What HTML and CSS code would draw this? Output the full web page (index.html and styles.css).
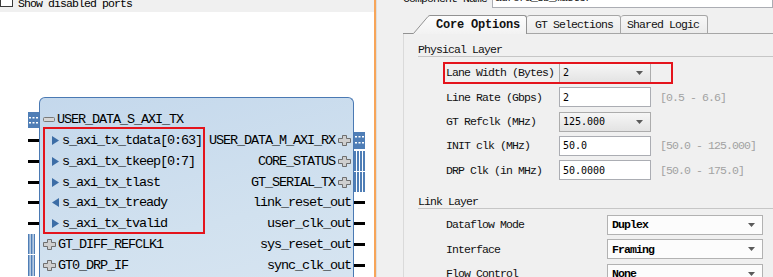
FILE: index.html
```html
<!DOCTYPE html>
<html>
<head>
<meta charset="utf-8">
<title>Aurora IP</title>
<link rel="stylesheet" href="styles.css">
</head>
<body>
<div class="app">
  <div class="left">
    <div class="toolbar">
      <span class="chk"></span><span class="chk-label">Show disabled ports</span>
    </div>
    <div class="canvas">
      <div class="block">
        <div class="col-l">
          <div class="lrow">
            <span class="stub"><svg width="11" height="16" viewBox="0 0 11 16"><rect width="11" height="16" fill="#4f7eb6"/><g fill="#fff"><rect x="1" y="5" width="2" height="1.5"/><rect x="4.5" y="5" width="2" height="1.5"/><rect x="8" y="5" width="2" height="1.5"/><rect x="1" y="10" width="2" height="1.5"/><rect x="4.5" y="10" width="2" height="1.5"/><rect x="8" y="10" width="2" height="1.5"/></g></svg></span>
            <span class="minus"><svg width="12" height="5" viewBox="0 0 12 5"><rect x="0.5" y="0.5" width="11" height="4" rx="1" fill="#d6d6d6" stroke="#7a7a7a"/></svg></span>
            <span class="bus-name">USER_DATA_S_AXI_TX</span>
          </div>
          <div class="hl-group">
            <div class="lrow in-group"><span class="stub"><span class="wire"></span></span><span class="arr"><svg width="7" height="9" viewBox="0 0 7 9"><path d="M0 0L7 4.5L0 9Z" fill="#3c6da6"/></svg></span><span class="pin-name">s_axi_tx_tdata[0:63]</span></div>
            <div class="lrow in-group"><span class="stub"><span class="wire"></span></span><span class="arr"><svg width="7" height="9" viewBox="0 0 7 9"><path d="M0 0L7 4.5L0 9Z" fill="#3c6da6"/></svg></span><span class="pin-name">s_axi_tx_tkeep[0:7]</span></div>
            <div class="lrow in-group"><span class="stub"><span class="wire"></span></span><span class="arr"><svg width="7" height="9" viewBox="0 0 7 9"><path d="M0 0L7 4.5L0 9Z" fill="#3c6da6"/></svg></span><span class="pin-name">s_axi_tx_tlast</span></div>
            <div class="lrow in-group"><span class="stub"><span class="wire"></span></span><span class="arr"><svg width="7" height="9" viewBox="0 0 7 9"><path d="M7 0L0 4.5L7 9Z" fill="#3c6da6"/></svg></span><span class="pin-name">s_axi_tx_tready</span></div>
            <div class="lrow in-group"><span class="stub"><span class="wire"></span></span><span class="arr"><svg width="7" height="9" viewBox="0 0 7 9"><path d="M0 0L7 4.5L0 9Z" fill="#3c6da6"/></svg></span><span class="pin-name">s_axi_tx_tvalid</span></div>
          </div>
          <div class="lrow">
            <span class="stub"><svg width="11" height="21" viewBox="0 0 11 21"><g fill="#4f7eb6"><rect x="0" y="0" width="1.6" height="20"/><rect x="2.6" y="0" width="2" height="20"/><rect x="5.6" y="0" width="1.4" height="20"/></g></svg></span>
            <span class="plus"><svg width="13" height="11" viewBox="0 0 13 11"><path d="M4.5 0.5h4v3h4v4h-4v3h-4v-3h-4v-4h4z" fill="#cfcfcf" stroke="#6f6f6f"/></svg></span>
            <span class="bus-name">GT_DIFF_REFCLK1</span>
          </div>
          <div class="lrow">
            <span class="stub"><svg width="11" height="21" viewBox="0 0 11 21"><g fill="#4f7eb6"><rect x="0" y="0" width="1.6" height="21"/><rect x="2.6" y="0" width="2" height="21"/><rect x="5.6" y="0" width="1.4" height="21"/></g></svg></span>
            <span class="plus"><svg width="13" height="11" viewBox="0 0 13 11"><path d="M4.5 0.5h4v3h4v4h-4v3h-4v-3h-4v-4h4z" fill="#cfcfcf" stroke="#6f6f6f"/></svg></span>
            <span class="bus-name">GT0_DRP_IF</span>
          </div>
        </div>
        <div class="col-r">
          <div class="rrow">
            <span class="bus-name r">USER_DATA_M_AXI_RX</span>
            <span class="plus r"><svg width="13" height="11" viewBox="0 0 13 11"><path d="M4.5 0.5h4v3h4v4h-4v3h-4v-3h-4v-4h4z" fill="#cfcfcf" stroke="#6f6f6f"/></svg></span>
            <span class="stub"><svg width="11" height="17" viewBox="0 0 11 17"><rect width="11" height="17" fill="#4f7eb6"/><g fill="#fff"><rect x="1" y="4" width="2" height="1.5"/><rect x="4.5" y="4" width="2" height="1.5"/><rect x="8" y="4" width="2" height="1.5"/><rect x="1" y="10" width="2" height="1.5"/><rect x="4.5" y="10" width="2" height="1.5"/><rect x="8" y="10" width="2" height="1.5"/></g></svg></span>
          </div>
          <div class="rrow">
            <span class="bus-name r">CORE_STATUS</span>
            <span class="plus r"><svg width="13" height="11" viewBox="0 0 13 11"><path d="M4.5 0.5h4v3h4v4h-4v3h-4v-3h-4v-4h4z" fill="#cfcfcf" stroke="#6f6f6f"/></svg></span>
            <span class="stub"><svg width="11" height="21" viewBox="0 0 11 21"><g fill="#4f7eb6"><rect x="0" y="0" width="2" height="20"/><rect x="3" y="0" width="2" height="20"/><rect x="6" y="0" width="2" height="20"/><rect x="9" y="0" width="2" height="20"/></g></svg></span>
          </div>
          <div class="rrow">
            <span class="bus-name r">GT_SERIAL_TX</span>
            <span class="plus r"><svg width="13" height="11" viewBox="0 0 13 11"><path d="M4.5 0.5h4v3h4v4h-4v3h-4v-3h-4v-4h4z" fill="#cfcfcf" stroke="#6f6f6f"/></svg></span>
            <span class="stub"><svg width="11" height="21" viewBox="0 0 11 21"><g fill="#4f7eb6"><rect x="0" y="0" width="2" height="20"/><rect x="3" y="0" width="2" height="20"/><rect x="6" y="0" width="2" height="20"/><rect x="9" y="0" width="2" height="20"/></g></svg></span>
          </div>
          <div class="rrow"><span class="pin-name r">link_reset_out</span><span class="stub"><span class="wire"></span></span></div>
          <div class="rrow"><span class="pin-name r">user_clk_out</span><span class="stub"><span class="wire"></span></span></div>
          <div class="rrow"><span class="pin-name r">sys_reset_out</span><span class="stub"><span class="wire"></span></span></div>
          <div class="rrow"><span class="pin-name r">sync_clk_out</span><span class="stub"><span class="wire"></span></span></div>
        </div>
      </div>
    </div>
  </div>
  <div class="divider"></div>
  <div class="right">
    <div class="comp">
      <span class="comp-label">Component Name</span>
      <span class="comp-field">aurora_8b_master</span>
    </div>
    <div class="tabs">
      <svg class="slant" width="27" height="19" viewBox="0 0 27 19">
        <defs><linearGradient id="tg" x1="0" y1="0" x2="0" y2="1"><stop offset="0" stop-color="#fdfdfd"/><stop offset="1" stop-color="#f2f2f2"/></linearGradient></defs>
        <path d="M10 19L25 1.5Q26 0.5 27 0.5V19Z" fill="url(#tg)"/>
        <path d="M0 18.5H10.5L25 1.5Q26 0.5 27 0.5" fill="none" stroke="#929292"/>
      </svg>
      <div class="tab sel">Core Options</div>
      <div class="tab gt">GT Selections</div>
      <div class="tab sh">Shared Logic</div>
      <div class="tab-fill"></div>
    </div>
    <div class="panel">
      <div class="sec-h">Physical Layer</div>
      <div class="frow first">
        <div class="hl">
          <span class="lbl">Lane Width (Bytes)</span>
          <div class="dd"><span class="val">2</span><svg width="7" height="4" viewBox="0 0 7 4"><path d="M0 0H7L3.5 4Z" fill="#5a5a5a"/></svg></div>
        </div>
      </div>
      <div class="frow">
        <span class="lbl">Line Rate (Gbps)</span>
        <div class="tf"><span class="val">2</span></div>
        <span class="range">[0.5 - 6.6]</span>
      </div>
      <div class="frow">
        <span class="lbl">GT Refclk (MHz)</span>
        <div class="dd"><span class="val">125.000</span><svg width="7" height="4" viewBox="0 0 7 4"><path d="M0 0H7L3.5 4Z" fill="#5a5a5a"/></svg></div>
      </div>
      <div class="frow">
        <span class="lbl">INIT clk (MHz)</span>
        <div class="tf"><span class="val">50.0</span></div>
        <span class="range">[50.0 - 125.000]</span>
      </div>
      <div class="frow">
        <span class="lbl">DRP Clk (in MHz)</span>
        <div class="tf"><span class="val">50.0000</span></div>
        <span class="range">[50.0 - 175.0]</span>
      </div>
      <div class="sec-h link">Link Layer</div>
      <div class="frow first">
        <span class="lbl wide">Dataflow Mode</span>
        <div class="dd2"><span class="val2">Duplex</span><svg width="7" height="4" viewBox="0 0 7 4"><path d="M0 0H7L3.5 4Z" fill="#5a5a5a"/></svg></div>
      </div>
      <div class="frow">
        <span class="lbl wide">Interface</span>
        <div class="dd2"><span class="val2">Framing</span><svg width="7" height="4" viewBox="0 0 7 4"><path d="M0 0H7L3.5 4Z" fill="#5a5a5a"/></svg></div>
      </div>
      <div class="frow">
        <span class="lbl wide">Flow Control</span>
        <div class="dd2"><span class="val2">None</span><svg width="7" height="4" viewBox="0 0 7 4"><path d="M0 0H7L3.5 4Z" fill="#5a5a5a"/></svg></div>
      </div>
    </div>
  </div>
</div>
</body>
</html>
```

FILE: styles.css
```css
* { box-sizing: border-box; margin: 0; padding: 0; }
html, body { width: 773px; height: 277px; overflow: hidden; background: #fff; }
body { font-family: "Liberation Mono", monospace; color: #000; }
svg { display: block; }

.app { display: flex; height: 277px; }

/* left diagram panel */
.left { width: 374px; flex: none; display: flex; flex-direction: column; background: #fff; }
.toolbar {
  height: 12px; flex: none; background: #f0f0f0; overflow: hidden;
  display: flex; align-items: flex-end; padding-bottom: 5px;
}
.chk { width: 13px; height: 13px; flex: none; border: 1px solid #3a3a3a; background: #fff; }
.chk-label { margin-left: 5px; font-size: 11.5px; letter-spacing: -0.9px; line-height: 10px; margin-bottom: -2px; white-space: nowrap; }

.canvas { flex: 1; overflow: hidden; padding: 85px 0 0 39px; }
.block {
  width: 315px; height: 230px;
  border: 1px solid #4a79b3; border-bottom: none;
  border-radius: 6px 6px 0 0;
  background: linear-gradient(165deg, #c4d8ec 0%, #d1e1ef 55%, #d9e6f2 100%);
  display: flex; padding-top: 11.3px;
  font-size: 13.5px; letter-spacing: -1.1px;
}
.col-l { width: 166px; flex: none; display: flex; flex-direction: column; }
.col-r { flex: 1; display: flex; flex-direction: column; padding-top: 20.8px; min-width: 0; }

.lrow { display: flex; align-items: center; height: 20.8px; margin-left: -12px; white-space: nowrap; }
.lrow.in-group { margin-left: -15px; }
.rrow { display: flex; align-items: center; justify-content: flex-end; height: 20.8px; margin-right: -12px; white-space: nowrap; }

.stub { width: 11px; flex: none; display: flex; align-items: center; }
.wire { display: block; width: 11px; height: 3px; background: #000; }

.minus { margin-left: 4px; flex: none; }
.plus { margin-left: 4px; flex: none; }
.plus.r { margin-left: 0; margin-right: 3px; }
.bus-name { margin-left: 2px; }
.bus-name.r { margin-left: 0; margin-right: 3px; }
.arr { margin-left: 13px; flex: none; }
.pin-name { margin-left: 3px; }
.pin-name.r { margin-left: 0; margin-right: 3px; }

.hl-group {
  margin: -3px 0 0 3px; padding-top: 3px; width: 162px;
  outline: 2px solid #e4141c; outline-offset: -2px;
}

.divider { width: 2px; flex: none; background: #f7a559; }

/* right configuration panel */
.right {
  flex: 1; min-width: 0; background: #f0f0f0; border-left: 1px solid #dedede;
  padding-left: 26px; display: flex; flex-direction: column;
  font-size: 11.5px; letter-spacing: -0.9px; color: #111;
}
.comp { display: flex; align-items: center; height: 20px; margin-top: -12px; white-space: nowrap; }
.comp-label { width: 89px; flex: none; }
.comp-field {
  flex: 1; height: 20px; border: 1px solid #abadb3; background: #fff;
  padding-left: 2px; line-height: 18px;
}

.tabs { display: flex; height: 19px; margin-top: 7px; flex: none; }
.slant { flex: none; }
.tab {
  height: 19px; line-height: 18px; white-space: nowrap;
  border-top: 1px solid #a6a6a6; border-right: 1px solid #a6a6a6; border-bottom: 1px solid #a6a6a6;
  background: linear-gradient(#f7f7f7, #ebebeb);
  border-radius: 0 3px 0 0;
}
.tab.sel {
  width: 97px; padding-left: 6px; border-color: #929292; border-bottom: none;
  background: linear-gradient(#fdfdfd, #f2f2f2);
  font-weight: bold; font-size: 12px; letter-spacing: -0.2px;
}
.tab.gt { width: 94px; padding-left: 8px; border-radius: 3px 3px 0 0; }
.tab.sh { width: 87px; padding-left: 6px; border-radius: 3px 3px 0 0; }
.tab-fill { flex: 1; border-bottom: 1px solid #a6a6a6; }

.panel { flex: 1; border-left: 1px solid #dadada; padding-left: 14px; }
.sec-h {
  height: 13px; line-height: 12px; margin-top: 10px;
  border-bottom: 1px solid #c6c6c6; white-space: nowrap;
}
.sec-h.link { margin-top: 13.5px; }

.frow { display: flex; align-items: center; height: 24.33px; padding-left: 28px; white-space: nowrap; }
.frow.first { margin-top: 3.8px; }
.hl {
  display: flex; align-items: center; height: 22px; width: 230px;
  margin-left: -3px; padding-left: 3px;
  outline: 2px solid #e4141c; outline-offset: -2px;
}
.lbl { width: 113px; flex: none; }
.lbl.wide { width: 161px; }

.dd {
  width: 92px; height: 20px; flex: none;
  border: 1px solid #acacac; background: linear-gradient(#f6f6f6, #e3e3e3);
  display: flex; align-items: center; justify-content: space-between;
  padding: 0 7px 0 3px;
}
.tf {
  width: 92px; height: 20px; flex: none;
  border: 1px solid #abadb3; background: #fff;
  display: flex; align-items: center; padding-left: 3px;
}
.val { font-family: "DejaVu Sans Mono", monospace; font-size: 10px; letter-spacing: 0; color: #000; }
.range { margin-left: 9px; color: #a2a2a2; }

.dd2 {
  width: 156px; height: 20px; flex: none;
  border: 1px solid #b2b2b2; background: #fcfcfc;
  display: flex; align-items: center; justify-content: space-between;
  padding: 0 7px 0 4px;
}
.val2 { font-weight: bold; color: #000; }
```
